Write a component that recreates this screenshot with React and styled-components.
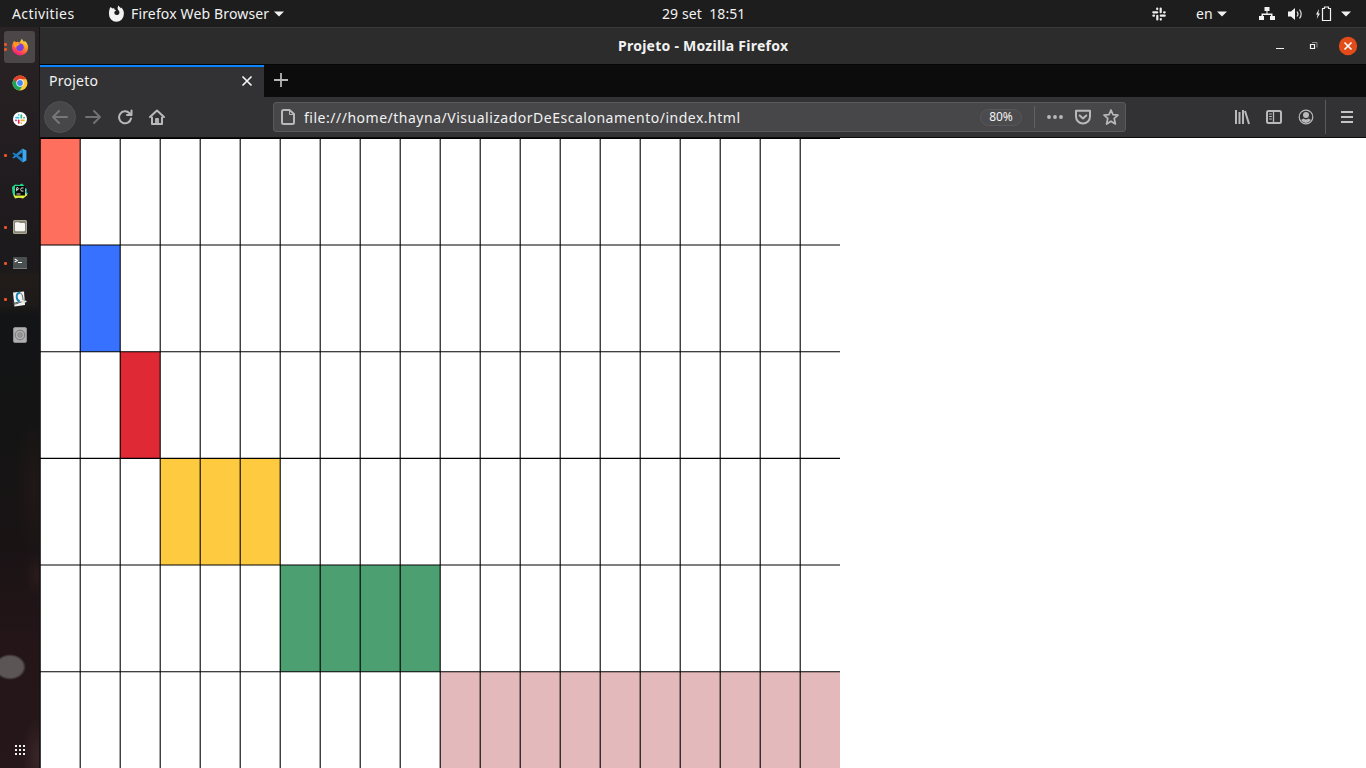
import React from 'react';
import styled, { createGlobalStyle } from 'styled-components';

const Global = createGlobalStyle`
  * { box-sizing: border-box; }
  body { margin: 0; overflow: hidden; background: #1d1d1d; font-family: "Noto Sans", "Open Sans", sans-serif; }
  svg { display: block; flex: none; }
`;

const Desktop = styled.div`
  width: 1366px; height: 768px; display: flex; flex-direction: column; overflow: hidden;
`;
const Text = styled.span`
  font-size: ${p => p.$size || 14}px;
  font-weight: ${p => (p.$bold ? 700 : 400)};
  letter-spacing: ${p => p.$track || 0}px;
  color: ${p => p.$color || '#f2f2f2'};
  white-space: pre; line-height: 20px; flex: none;
`;
const TopBar = styled.header`
  height: 27px; flex: none; display: grid; grid-template-columns: 662px 468px 1fr;
  align-items: center; background: #1d1d1d;
`;
const AppMenu = styled.div`
  display: flex; align-items: center; padding-left: 12px;
`;
const Activities = styled.div`width: 96px; display: flex;`;
const AppName = styled.div`width: 143px; margin-left: 6px; display: flex;`;
const Status = styled.div`
  display: flex; align-items: center; padding-left: 22px;
`;
const StatusItem = styled.div`width: ${p => p.$w}px; display: flex; align-items: center; flex: none;`;
const Workspace = styled.div`display: flex; flex: 1; min-height: 0;`;
const Dock = styled.nav`
  width: 40px; flex: none; display: flex; flex-direction: column; justify-content: space-between;
  border-right: 1px solid #151314;
  background:
    radial-gradient(ellipse 16px 13px at 10px 640px, #5b5655 0 80%, transparent 100%),
    radial-gradient(ellipse 12px 22px at 37px 548px, #38201f88, transparent),
    radial-gradient(ellipse 20px 70px at 34px 460px, #2a1b1a88, transparent),
    radial-gradient(ellipse 16px 40px at 38px 730px, #4c323588, transparent),
    linear-gradient(#292325 0, #211c1f 150px, #1b191b 242px, #211c1a 249px, #1d1a19 278px, #131416 288px, #141414 400px, #181314 500px, #241519 620px, #25171a 741px);
`;
const Launchers = styled.div`padding-top: 2px;`;
const Launcher = styled.div`
  height: 36px; padding: 2px 4px; display: flex; position: relative;
`;
const Tile = styled.div`
  width: 32px; height: 32px; border-radius: 3px; display: flex; align-items: center; justify-content: center;
  background: ${p => (p.$active ? '#4b4748' : 'transparent')};
`;
const Running = styled.div`
  position: absolute; left: 4px; top: 0; height: 36px; display: flex; flex-direction: column;
  justify-content: center; gap: 2px;
`;
const Dot = styled.i`width: 3px; height: 3px; border-radius: 1px; background: #e95420;`;
const AppsButton = styled.div`padding: 0 0 13px 15px;`;

const Window = styled.main`flex: 1; display: flex; flex-direction: column; min-width: 0; background: #fff;`;
const TitleBar = styled.div`
  height: 37px; flex: none; display: grid; grid-template-columns: 578px 1fr 92px; align-items: center;
  background: #2c2c2c; border-top: 1px solid #3a3a3a;
`;
const WindowControls = styled.div`display: flex; align-items: center; padding-bottom: 1px;`;
const TabStrip = styled.div`
  height: 33px; flex: none; display: flex; background: #0c0c0c; border-top: 1px solid #050505;
`;
const Tab = styled.div`
  width: 224px; display: flex; align-items: center; justify-content: space-between;
  background: #323234; border-top: 2px solid #0a84ff; padding: 0 11px 2px 9px;
`;
const NewTab = styled.div`padding: 8px 10px;`;
const Toolbar = styled.div`
  height: 41px; flex: none; display: flex; align-items: center; background: #323234;
  border-bottom: 1px solid #0c0c0d; padding-left: 4px;
`;
const BackButton = styled.div`
  width: 32px; height: 32px; border-radius: 50%; background: #474749; border: 1px solid #505052;
  display: flex; align-items: center; justify-content: center;
`;
const NavIcons = styled.div`display: flex; gap: 16px; margin-left: 9px; width: 188px;`;
const AddressBar = styled.div`
  width: 853px; height: 30px; border: 1px solid #5a5a5c; border-radius: 3px; background: #474749;
  display: flex; align-items: center; padding-left: 6px;
`;
const Url = styled.div`width: 684px; padding: 1px 0 0 8px; display: flex;`;
const Zoom = styled.div`
  width: 42px; height: 17px; border-radius: 9px; border: 1px solid #58585a; background: #4b4b4d;
  display: flex; align-items: center; justify-content: center; margin-right: 12px;
`;
const Divider = styled.div`width: 1px; height: ${p => p.$h}px; background: ${p => p.$color};`;
const PageActions = styled.div`display: flex; gap: 12px; margin-left: 12px;`;
const Tools = styled.div`display: flex; gap: 16px; margin: 0 11px 0 108px;`;
const Menu = styled.div`margin-left: 13px;`;
const Page = styled.section`flex: 1; min-height: 0; overflow: hidden; background: #fff;`;

const Stroke = ({ size = 16, color = '#b9b9bb', w = 2, children }) => (
  <svg width={size} height={size} viewBox="0 0 16 16" fill="none" stroke={color} strokeWidth={w}
    strokeLinecap="round" strokeLinejoin="round">{children}</svg>
);
const Caret = () => <svg width="10" height="6"><path d="M0 .5h10L5 5.5z" fill="#f2f2f2" /></svg>;

const FirefoxMono = () => (
  <svg width="17" height="17" viewBox="0 0 17 17" fill="#f2f2f2">
    <path d="M2.500 2l2 1.500 1.700-.5c-.2 1.200.3 1.800 2 2.200L6.400 6.800c-.8 3 2.600 4.300 4.400 2.400C12 7.800 11.500 6 10 4.700c-.8-1.600-.3-3.400.8-4.200.2 1.400 1.200 1.700 2.100 2.800l.4-.8c2 2 2.900 4.400 2.500 7A7.400 7.400 0 0 1 1 9.300C.8 6.600 1.400 3.700 2.500 2z" />
  </svg>
);
const SlackMono = () => (
  <svg width="14" height="14" viewBox="0 0 14 14" stroke="#eee" strokeWidth="2.200" strokeLinecap="round">
    <path d="M1.300 5.300h3.900M5.200 1.500v.6M8.700 1.500v3.700M12.100 5.300h.6M8.800 8.700h3.900M8.800 12v.6M5.300 8.800v3.700M1.400 8.700h.6" />
  </svg>
);

const icons = {
  firefox: (
    <svg width="18" height="18" viewBox="0 0 18 18">
      <defs><linearGradient id="fx" x1=".8" y1="0" x2=".3" y2="1">
        <stop offset="0" stopColor="#fff04a" /><stop offset=".4" stopColor="#ff9a25" />
        <stop offset=".75" stopColor="#ff4650" /><stop offset="1" stopColor="#e31587" />
      </linearGradient></defs>
      <path d="M3 3l2 1.300 2-.6 1 1C10 3 10 1.500 11 .7c.4 1.800 1.300 2 2.200 3.200l.5-1.200C16.500 5 17.500 8 17 11A8.100 8.100 0 0 1 1 10C.8 7 1.800 5 3 3z" fill="url(#fx)" />
      <circle cx="9" cy="9.200" r="3.700" fill="#7542e5" />
      <path d="M2.600 5.500C5 3.800 7 5 8.800 6.200L6.500 8C5 8 5 9 5.500 10 3.500 9.500 2.500 7.500 2.600 5.500z" fill="#ff9820" />
    </svg>
  ),
  chrome: (
    <svg width="16" height="16" viewBox="0 0 16 16">
      <circle cx="8" cy="8" r="7.500" fill="#fdc93b" />
      <path d="M8 8L1.500 4.250A7.500 7.500 0 0 0 7.600 15.500L11 9.800z" fill="#1ea35a" />
      <path d="M1.500 4.250A7.500 7.500 0 0 1 14.500 4.250H8L5 8z" fill="#e0402f" />
      <circle cx="8" cy="8" r="3.700" fill="#fff" /><circle cx="8" cy="8" r="2.900" fill="#4285f4" />
    </svg>
  ),
  slack: (
    <svg width="14" height="14" viewBox="0 0 14 14" strokeWidth="1.700" strokeLinecap="round">
      <circle cx="7" cy="7" r="7" fill="#fff" />
      <path d="M5.700 2.800v.2M3 5.700h2.700" stroke="#36c5f0" /><path d="M8.300 3v2.700M11 5.700h.1" stroke="#2eb67d" />
      <path d="M8.300 8.300H11M8.300 11v.2" stroke="#ecb22e" /><path d="M5.700 8.300V11M2.900 8.300h.2" stroke="#e01e5a" />
    </svg>
  ),
  code: (
    <svg width="15" height="15" viewBox="0 0 15 15">
      <path d="M10.500.6L.4 9.600l1.300 1L10.500 4.400z" fill="#2489ca" />
      <path d="M1.700 4.400L.4 5.400l10.100 9V10.600z" fill="#1a7fc4" />
      <path d="M10.500.6L14.400 2.400v10.200l-3.900 1.800z" fill="#3caaf2" />
    </svg>
  ),
  pycharm: (
    <svg width="16" height="16" viewBox="0 0 16 16">
      <path d="M0 4l3-2.500L7 2l3-1.500L12.500 3l.5 7-5 5-6-1L.5 10z" fill="#21d789" />
      <path d="M12.500 4.500L15 6l-.5 2.500L16 11l-3 1z" fill="#15b4d0" />
      <path d="M1.500 11.500L6 12l5.500-6L14 7l-1 2.500L15.500 12 11 15.500l-4-1-4 1z" fill="#e2ef3d" />
      <rect x="3" y="3" width="10" height="9.500" fill="#080808" />
      <path d="M4.700 8.200V4.700H6q1.500 1 0 2H4.700M11.500 5q-2.700-1-2.800 1.500.1 2.500 2.800 1.500M4.500 11h4" fill="none" stroke="#ddd" strokeWidth="1" />
    </svg>
  ),
  files: (
    <svg width="14" height="14" viewBox="0 0 14 14">
      <rect width="14" height="14" rx="1.500" fill="#aaa695" /><rect x="1" y="1" width="12" height="12" rx="1" fill="#878375" />
      <path d="M2 3.200q0-.9.900-.9h3l1 .7h4.200q.9 0 .9.900v6.400q0 1-.9 1H2.900q-.9 0-.9-1z" fill="#f8f6f3" />
    </svg>
  ),
  terminal: (
    <svg width="14" height="12" viewBox="0 0 14 12">
      <rect width="14" height="12" rx="1" fill="#4a4f50" /><rect y="11" width="14" height="1" fill="#777" />
      <path d="M1.700 2l2.500 1.500-2.500 1.500M5 5.500h4" fill="none" stroke="#fff" strokeWidth="1.100" />
    </svg>
  ),
  viewer: (
    <svg width="15" height="16" viewBox="0 0 15 16">
      <path d="M1 1.500l11-1 1 13.500-10.500 1.500z" fill="#f1f3f3" />
      <path d="M8 1.800Q4.500 2 4.700 6q.2 3.500 3 4.500" fill="none" stroke="#1683b5" strokeWidth="1.900" />
      <path d="M8 1.800Q10.800 2.500 11 9" fill="none" stroke="#444" strokeWidth=".8" />
      <path d="M.5 11.500q3 1 6-.5M1 13q3 .5 6.500-1.500L14 9.500" fill="none" stroke="#3c4649" strokeWidth=".9" />
      <path d="M9 10.500l5-1 .8 1.500-5 1.500z" fill="#e4e6e6" />
    </svg>
  ),
  disk: (
    <svg width="14" height="16" viewBox="0 0 14 16">
      <rect x=".5" y=".5" width="13" height="15" rx="1.500" fill="#b0b0b0" stroke="#8c8c8c" />
      <g fill="none" stroke="#777"><circle cx="7" cy="8" r="4.800" /><circle cx="7" cy="8" r="2.200" /></g>
      <circle cx="7" cy="8" r=".7" fill="#666" />
    </svg>
  ),
};

const launchers = [
  { icon: 'firefox', dots: 2, active: true }, { icon: 'chrome', dots: 0 }, { icon: 'slack', dots: 0 },
  { icon: 'code', dots: 1 }, { icon: 'pycharm', dots: 0 }, { icon: 'files', dots: 1 },
  { icon: 'terminal', dots: 1 }, { icon: 'viewer', dots: 1 }, { icon: 'disk', dots: 0 },
];

const CELL_W = 40;
const CELL_H = 320 / 3;
const tasks = [
  { start: 0, length: 1, color: '#ff6f5e' },
  { start: 1, length: 1, color: '#3672ff' },
  { start: 2, length: 1, color: '#df2935' },
  { start: 3, length: 3, color: '#fdca40' },
  { start: 6, length: 4, color: '#4c9f70' },
  { start: 10, length: 10, color: '#e3b9bc' },
];

const Schedule = () => (
  <svg width="800" height="630" viewBox="0 0 800 630">
    {tasks.map((t, row) => (
      <rect key={t.color} x={t.start * CELL_W} y={row * CELL_H + 0.4} width={t.length * CELL_W} height={CELL_H} fill={t.color} />
    ))}
    <g stroke="#000" strokeWidth="1.1">
      {Array.from({ length: 20 }, (_, i) => (
        <line key={i} x1={i * CELL_W + 0.2} x2={i * CELL_W + 0.2} y1="0" y2="630" />
      ))}
      {tasks.map((t, i) => (
        <line key={t.color} x1="0" x2="800" y1={i * CELL_H + 0.4} y2={i * CELL_H + 0.4} />
      ))}
    </g>
  </svg>
);

export default function App() {
  return (
    <Desktop>
      <Global />
      <TopBar>
        <AppMenu>
          <Activities><Text $track={0.42}>Activities</Text></Activities>
          <FirefoxMono />
          <AppName><Text $track={0.15}>Firefox Web Browser</Text></AppName>
          <Caret />
        </AppMenu>
        <Text $track={0.08}>29 set  18:51</Text>
        <Status>
          <StatusItem $w={44}><SlackMono /></StatusItem>
          <StatusItem $w={21}><Text>en</Text></StatusItem>
          <StatusItem $w={42}><Caret /></StatusItem>
          <StatusItem $w={29}>
            <svg width="16" height="14" fill="#f2f2f2"><path d="M5.500 0h5v4h-2v2.500h5V9H16v4h-5V9h1V8H4v1h1v4H0V9h2.500V6.500h5V4h-2z" /></svg>
          </StatusItem>
          <StatusItem $w={28}>
            <svg width="16" height="14" fill="#f2f2f2"><path d="M0 4.500h3L7 1v12L3 9.500H0z" /><path d="M9 4.500q2 2.500 0 5M11.500 2.500q3.300 4.500 0 9" fill="none" stroke="#ddd" strokeWidth="1.200" /></svg>
          </StatusItem>
          <StatusItem $w={25}>
            <svg width="16" height="16"><path d="M3 3L0 8.500h1.700L.7 13 4 7.500H2.300z" fill="#f2f2f2" /><path d="M6.500 2.500h2V1h4v1.500h2v12h-8z" fill="none" stroke="#f2f2f2" strokeWidth="1.200" /></svg>
          </StatusItem>
          <Caret />
        </Status>
      </TopBar>
      <Workspace>
        <Dock>
          <Launchers>
            {launchers.map(l => (
              <Launcher key={l.icon}>
                <Tile $active={l.active}>{icons[l.icon]}</Tile>
                <Running>{Array.from({ length: l.dots }, (_, i) => <Dot key={i} />)}</Running>
              </Launcher>
            ))}
          </Launchers>
          <AppsButton>
            <svg width="10" height="10" fill="#f2f2f2">
              {[0, 4, 8].flatMap(y => [0, 4, 8].map(x => <rect key={`${x}-${y}`} x={x} y={y} width="2" height="2" />))}
            </svg>
          </AppsButton>
        </Dock>
        <Window>
          <TitleBar>
            <span />
            <Text $bold $size={14} $track={0.25}>Projeto - Mozilla Firefox</Text>
            <WindowControls>
              <svg width="92" height="20">
                <path d="M2 12.500h8" stroke="#f2f2f2" />
                <path d="M36.500 8.500h4v4h-4z" fill="none" stroke="#f2f2f2" strokeWidth="1.200" />
                <path d="M38 6.500h5v5" fill="none" stroke="#8a8a8a" />
                <circle cx="74" cy="10" r="9.200" fill="#e34c19" />
                <path d="M70.500 6.500l7 7M77.500 6.500l-7 7" stroke="#fff" strokeWidth="1.600" />
              </svg>
            </WindowControls>
          </TitleBar>
          <TabStrip>
            <Tab>
              <Text $track={0.25}>Projeto</Text>
              <svg width="12" height="12"><path d="M1.500 1.500l9 9M10.500 1.500l-9 9" stroke="#f4f4f4" strokeWidth="1.700" /></svg>
            </Tab>
            <NewTab><svg width="14" height="14"><path d="M7 0v14M0 7h14" stroke="#b6b6b6" strokeWidth="1.800" /></svg></NewTab>
          </TabStrip>
          <Toolbar>
            <BackButton><Stroke color="#77777a"><path d="M15 8H1M7 2L1 8l6 6" /></Stroke></BackButton>
            <NavIcons>
              <Stroke color="#717174"><path d="M1 8h14M9 2l6 6-6 6" /></Stroke>
              <Stroke><path d="M14 9.500A6 6 0 1 1 12.500 4.200M14.500 1.500v4.500H10" strokeWidth="2" /></Stroke>
              <Stroke><path d="M1 8l7-6.500L15 8M3 8.500V15h10V8.500" /><path d="M7 14V9.800h2V14" strokeWidth="1.800" /></Stroke>
            </NavIcons>
            <AddressBar>
              <Stroke><path d="M3.500 1h6L14 5v8.500q0 1.500-1.500 1.500h-9Q2 15 2 13.500v-11Q2 1 3.500 1z" /><path d="M9.500 1.500v4H14" strokeWidth="1" /></Stroke>
              <Url><Text $track={0.51}>file:///home/thayna/VisualizadorDeEscalonamento/index.html</Text></Url>
              <Zoom><Text $size={12}>80%</Text></Zoom>
              <Divider $h={22} $color="#606067" />
              <PageActions>
                <svg width="16" height="16" fill="#b9b9bb"><circle cx="2" cy="8" r="1.900" /><circle cx="8" cy="8" r="1.900" /><circle cx="14" cy="8" r="1.900" /></svg>
                <Stroke><path d="M1 1.800h14v5.700a7 7 0 0 1-14 0z" /><path d="M4.700 6.500L8 9.500l3.300-3" /></Stroke>
                <Stroke w={1.7}><path d="M8 1l2 4.600 5 .5-3.800 3.300L12.400 15 8 12.200 3.600 15l1.200-5.600L1 6.100l5-.5z" /></Stroke>
              </PageActions>
            </AddressBar>
            <Tools>
              <svg width="16" height="16" stroke="#b9b9bb" strokeWidth="2"><path d="M2 1v14M5.500 3v12M9 1v14" /><path d="M11 2l4 13" /></svg>
              <Stroke><rect x="1" y="2" width="14" height="12" rx="1.500" /><path d="M7.500 2v12" strokeWidth="1.300" /><path d="M3.500 5h2M3.500 7.500h2M3.500 10h2" strokeWidth="1" /></Stroke>
              <svg width="16" height="16" fill="#b9b9bb"><circle cx="8" cy="8" r="6.800" fill="none" stroke="#b9b9bb" strokeWidth="1.200" /><circle cx="8" cy="6" r="3" /><path d="M3 11q2-1.500 2.500-1.500Q8 11.300 10.500 9.500L13 11q-2 3-5 3t-5-3z" /></svg>
            </Tools>
            <Divider $h={34} $color="#5a5a5c" />
            <Menu><svg width="16" height="16" stroke="#c4c4c6" strokeWidth="2"><path d="M2 3h12M2 8h12M2 13h12" /></svg></Menu>
          </Toolbar>
          <Page><Schedule /></Page>
        </Window>
      </Workspace>
    </Desktop>
  );
}
